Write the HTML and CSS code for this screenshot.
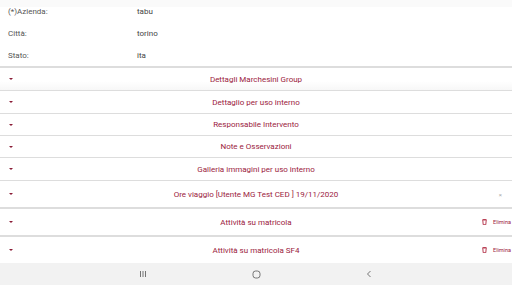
FILE: index.html
```html
<!DOCTYPE html>
<html lang="it">
<head>
  <meta charset="UTF-8">
  <title>Intervento</title>
  <link rel="stylesheet" href="styles.css">
</head>
<body>

<div class="info">
  <div class="info-row"><span class="label">(*)Azienda:</span><span class="value">tabu</span></div>
  <div class="info-row"><span class="label">Città:</span><span class="value">torino</span></div>
  <div class="info-row"><span class="label">Stato:</span><span class="value">ita</span></div>
</div>

<div class="sections">
  <div class="section h23 grey"><span class="caret"></span><span class="title">Dettagli Marchesini Group</span></div>
  <div class="section h23"><span class="caret"></span><span class="title">Dettaglio per uso interno</span></div>
  <div class="section h22"><span class="caret"></span><span class="title">Responsabile Intervento</span></div>
  <div class="section h22"><span class="caret"></span><span class="title">Note e Osservazioni</span></div>
  <div class="section h23"><span class="caret"></span><span class="title">Galleria immagini per uso interno</span></div>
  <div class="section h28"><span class="caret"></span><span class="title">Ore viaggio [Utente MG Test CED ] 19/11/2020</span><span class="close">×</span></div>
  <div class="section h28"><span class="caret"></span><span class="title">Attività su matricola</span>
    <span class="del"><svg width="5" height="6" viewBox="0 0 5 6"><path d="M0 1h5M1.5 1V0.4h2V1M0.8 1.4l0.4 4.3h2.6l0.4-4.3" fill="none" stroke="#b0283f" stroke-width="0.9"/></svg>Elimina</span></div>
  <div class="section h26"><span class="caret"></span><span class="title">Attività su matricola SF4</span>
    <span class="del"><svg width="5" height="6" viewBox="0 0 5 6"><path d="M0 1h5M1.5 1V0.4h2V1M0.8 1.4l0.4 4.3h2.6l0.4-4.3" fill="none" stroke="#b0283f" stroke-width="0.9"/></svg>Elimina</span></div>
</div>

<div class="navbar">
  <span class="nav-btn">
    <svg width="8" height="8" viewBox="0 0 8 8"><path d="M1.5 1v6M4 1v6M6.5 1v6" stroke="#666" stroke-width="0.9"/></svg>
  </span>
  <span class="nav-btn">
    <svg width="9" height="9" viewBox="0 0 9 9"><rect x="1" y="1" width="7" height="7" rx="2.6" fill="none" stroke="#666" stroke-width="0.9"/></svg>
  </span>
  <span class="nav-btn">
    <svg width="8" height="8" viewBox="0 0 8 8"><path d="M5.5 1L2.5 4l3 3" fill="none" stroke="#666" stroke-width="0.9"/></svg>
  </span>
</div>

</body>
</html>
```

FILE: styles.css
```css
body {
  margin: 0;
  width: 512px;
  height: 285px;
  overflow: hidden;
  font-family: Roboto, "Noto Sans", sans-serif;
  font-size: 8px;
  color: #555;
  background: #fff;
  display: flex;
  flex-direction: column;
}
.info {
  display: flex;
  flex-direction: column;
  height: 66px;
}
.info-row {
  height: 22px;
  display: flex;
  align-items: center;
  padding-left: 8px;
}
.info-row:first-child {
  background: linear-gradient(to bottom, #fafafa 0, #fafafa 7px, #fff 7px);
}
.label {
  width: 129px;
}
.value {
  color: #444;
}
.sections {
  border-top: 2px solid #ddd;
  flex: 1;
}
.section {
  display: flex;
  align-items: center;
  border-bottom: 1px solid #ddd;
  position: relative;
  color: #9b2240;
}
.h22 { height: 21px; }
.h23 { height: 22px; }
.h26 { height: 26px; border-bottom: none; }
.h28 { height: 26px; border-bottom-width: 2px; }
.grey {
  background: linear-gradient(to bottom, #fff 0, #fff 60%, #f7f7f7 100%);
}
.caret {
  width: 0;
  height: 0;
  margin-left: 9px;
  border-left: 2.5px solid transparent;
  border-right: 2.5px solid transparent;
  border-top: 2.5px solid #8a1c36;
}
.title {
  position: absolute;
  left: 0;
  right: 0;
  text-align: center;
  pointer-events: none;
}
.close {
  margin-left: auto;
  margin-right: 10px;
  color: #aaa;
  font-size: 6px;
}
.del {
  margin-left: auto;
  margin-right: 1px;
  display: flex;
  align-items: center;
  gap: 6px;
  font-size: 5.5px;
  color: #9b2240;
}
.navbar {
  height: 22px;
  background: #f2f2f2;
  display: flex;
  align-items: center;
  justify-content: center;
  gap: 104px;
}
.nav-btn {
  width: 9px;
  display: flex;
  justify-content: center;
}
```
